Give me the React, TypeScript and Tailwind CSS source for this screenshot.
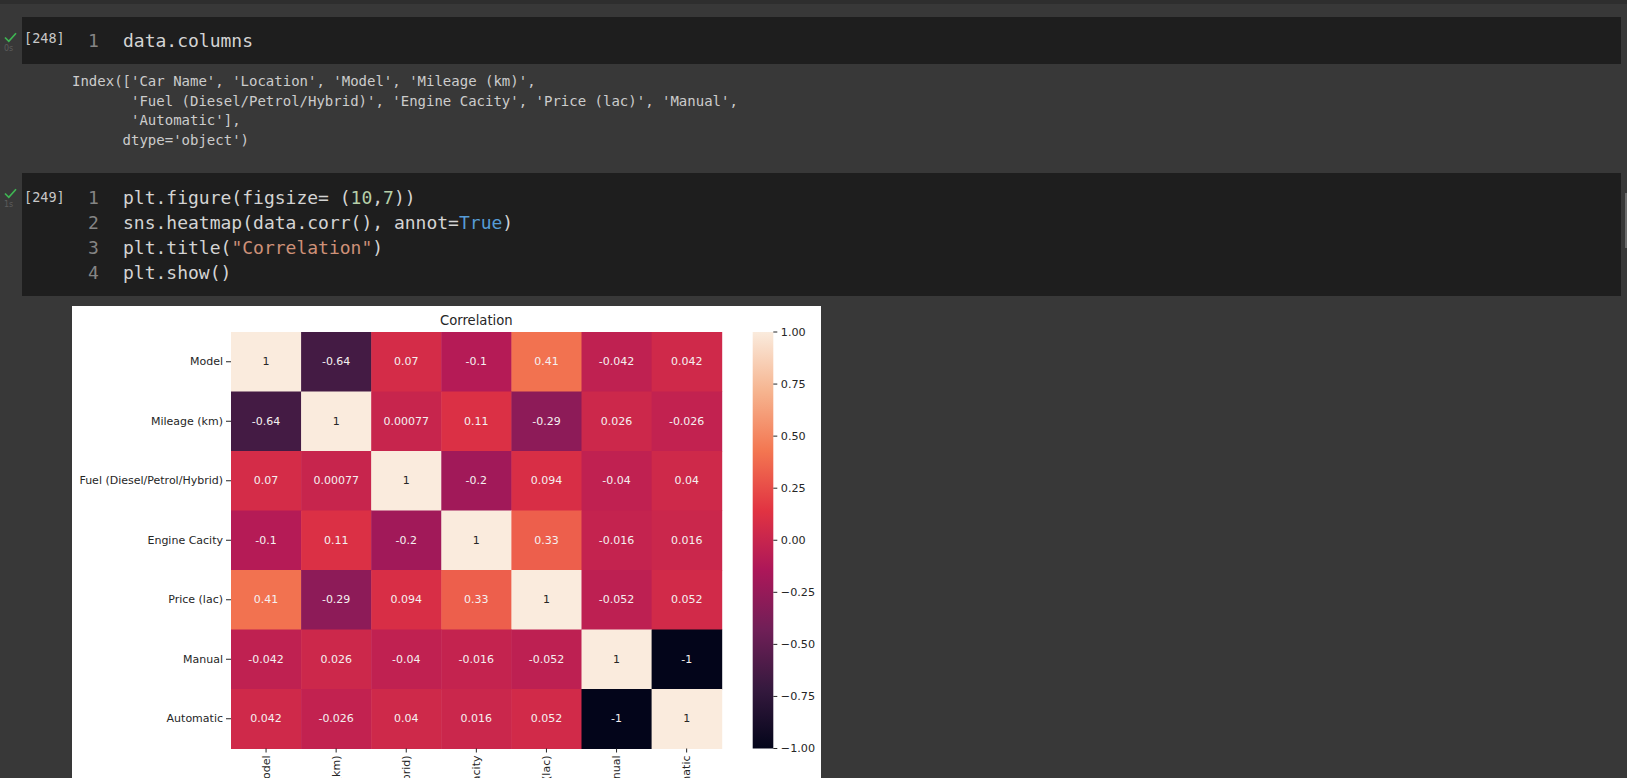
import React from "react";

const labels = ["Model", "Mileage (km)", "Fuel (Diesel/Petrol/Hybrid)", "Engine Cacity", "Price (lac)", "Manual", "Automatic"];

const corr: number[][] = [
  [1, -0.64, 0.07, -0.1, 0.41, -0.042, 0.042],
  [-0.64, 1, 0.00077, 0.11, -0.29, 0.026, -0.026],
  [0.07, 0.00077, 1, -0.2, 0.094, -0.04, 0.04],
  [-0.1, 0.11, -0.2, 1, 0.33, -0.016, 0.016],
  [0.41, -0.29, 0.094, 0.33, 1, -0.052, 0.052],
  [-0.042, 0.026, -0.04, -0.016, -0.052, 1, -1],
  [0.042, -0.026, 0.04, 0.016, 0.052, -1, 1],
];

// rocket colormap, sampled
const stops: [number, string][] = [
  [0, "#03051a"],
  [0.143, "#35193e"],
  [0.286, "#701f57"],
  [0.429, "#ad1759"],
  [0.571, "#e13342"],
  [0.714, "#f37651"],
  [0.857, "#f6b48f"],
  [1, "#faebdd"],
];

function hexToRgb(h: string) {
  return [parseInt(h.slice(1, 3), 16), parseInt(h.slice(3, 5), 16), parseInt(h.slice(5, 7), 16)];
}

function rocket(v: number) {
  const t = (v + 1) / 2;
  for (let i = 0; i < stops.length - 1; i++) {
    const [t0, c0] = stops[i];
    const [t1, c1] = stops[i + 1];
    if (t >= t0 && t <= t1) {
      const f = (t - t0) / (t1 - t0);
      const a = hexToRgb(c0);
      const b = hexToRgb(c1);
      const rgb = a.map((x, k) => Math.round(x + (b[k] - x) * f));
      return `rgb(${rgb[0]},${rgb[1]},${rgb[2]})`;
    }
  }
  return stops[stops.length - 1][1];
}

function CheckMark({ time }: { time: string }) {
  return (
    <div className="flex flex-col items-start">
      <svg width="13" height="11" viewBox="0 0 13 11">
        <polyline points="1,5.5 4.8,9.3 12,1.2" fill="none" stroke="#3fb553" strokeWidth="1.7" />
      </svg>
      <span className="text-[8px] leading-[12px] text-[#5c5c5c] font-['DejaVu_Sans',sans-serif]">{time}</span>
    </div>
  );
}

function Heatmap() {
  const x0 = 159;
  const y0 = 26;
  const cw = 70.1;
  const ch = 59.5;
  const H = ch * 7;
  const cbX = 680.7;
  const cbW = 20.6;
  const font = "DejaVu Sans, sans-serif";
  const cbTicks = [1, 0.75, 0.5, 0.25, 0, -0.25, -0.5, -0.75, -1];

  return (
    <svg width="749" height="540" viewBox="0 0 749 540" fontFamily={font}>
      <defs>
        <linearGradient id="rocketbar" x1="0" y1="1" x2="0" y2="0">
          {stops.map(([t, c]) => (
            <stop key={t} offset={t} stopColor={c} />
          ))}
        </linearGradient>
      </defs>
      <text x={x0 + (cw * 7) / 2} y={19} fontSize="13.2" textAnchor="middle" fill="#262626">
        Correlation
      </text>
      {corr.map((row, r) =>
        row.map((v, c) => (
          <g key={`${r}-${c}`}>
            <rect x={x0 + c * cw} y={y0 + r * ch} width={cw + 0.5} height={ch + 0.5} fill={rocket(v)} />
            <text
              x={x0 + c * cw + cw / 2}
              y={y0 + r * ch + ch / 2}
              fontSize="11"
              textAnchor="middle"
              dominantBaseline="central"
              fill={v === 1 ? "#262626" : "#f5f0f0"}
            >
              {String(v)}
            </text>
          </g>
        ))
      )}
      {labels.map((l, r) => (
        <g key={l}>
          <line x1={x0 - 5} x2={x0} y1={y0 + r * ch + ch / 2} y2={y0 + r * ch + ch / 2} stroke="#262626" strokeWidth="1" />
          <text x={x0 - 8} y={y0 + r * ch + ch / 2} fontSize="11" textAnchor="end" dominantBaseline="central" fill="#262626">
            {l}
          </text>
          <line x1={x0 + r * cw + cw / 2} x2={x0 + r * cw + cw / 2} y1={y0 + H} y2={y0 + H + 4} stroke="#262626" strokeWidth="1" />
          <text
            x={x0 + r * cw + cw / 2}
            y={y0 + H + 7}
            fontSize="11"
            textAnchor="end"
            dominantBaseline="central"
            fill="#262626"
            transform={`rotate(-90 ${x0 + r * cw + cw / 2} ${y0 + H + 7})`}
          >
            {l}
          </text>
        </g>
      ))}
      <rect x={cbX} y={y0} width={cbW} height={H} fill="url(#rocketbar)" />
      {cbTicks.map((t) => {
        const y = y0 + (1 - (t + 1) / 2) * H;
        return (
          <g key={t}>
            <line x1={cbX + cbW} x2={cbX + cbW + 4} y1={y} y2={y} stroke="#262626" strokeWidth="1" />
            <text x={cbX + cbW + 7.5} y={y} fontSize="11.2" dominantBaseline="central" fill="#262626">
              {(t < 0 ? "\u2212" : "") + Math.abs(t).toFixed(2)}
            </text>
          </g>
        );
      })}
    </svg>
  );
}

export default function App() {
  const mono = "font-['DejaVu_Sans_Mono','Liberation_Mono',monospace]";
  return (
    <div className="relative h-[778px] overflow-hidden bg-[#383838]">
      <div className="h-[4px] bg-[#2e2e2e]" />

      {/* cell 248 */}
      <div className="flex mt-[13px]">
        <div className="w-[22px] shrink-0 pl-[4px] pt-[15px]">
          <CheckMark time="0s" />
        </div>
        <div className={`flex-1 mr-[6px] bg-[#1e1e1e] flex py-[11px] ${mono}`}>
          <div className="w-[66px] pl-[2px] pt-[1px] text-[13.5px] leading-[19px] text-[#c8c8c8]">[248]</div>
          <div className="w-[35px] text-[18px] leading-[25px] text-[#858585]">1</div>
          <div className="text-[18px] leading-[25px] text-[#d4d4d4]">data.columns</div>
        </div>
      </div>

      <pre className={`mt-[8px] pl-[72px] text-[14px] leading-[19.5px] text-[#cccccc] ${mono}`}>
        {`Index(['Car Name', 'Location', 'Model', 'Mileage (km)',
       'Fuel (Diesel/Petrol/Hybrid)', 'Engine Cacity', 'Price (lac)', 'Manual',
       'Automatic'],
      dtype='object')`}
      </pre>

      {/* cell 249 */}
      <div className="flex mt-[23px]">
        <div className="w-[22px] shrink-0 pl-[4px] pt-[15px]">
          <CheckMark time="1s" />
        </div>
        <div className={`flex-1 mr-[6px] bg-[#1e1e1e] flex pt-[12px] pb-[11px] ${mono}`}>
          <div className="w-[66px] pl-[2px] pt-[3px] text-[13.5px] leading-[19px] text-[#c8c8c8]">[249]</div>
          <div className="w-[35px] text-[18px] leading-[25px] text-[#858585]">
            <div>1</div>
            <div>2</div>
            <div>3</div>
            <div>4</div>
          </div>
          <div className="text-[18px] leading-[25px] text-[#d4d4d4] whitespace-pre">
            <div>
              plt.figure(figsize= (<span className="text-[#b5cea8]">10</span>,<span className="text-[#b5cea8]">7</span>))
            </div>
            <div>
              sns.heatmap(data.corr(), annot=<span className="text-[#569cd6]">True</span>)
            </div>
            <div>
              plt.title(<span className="text-[#ce9178]">"Correlation"</span>)
            </div>
            <div>plt.show()</div>
          </div>
        </div>
      </div>

      <div className="ml-[72px] mt-[10px] w-[749px] h-[540px] bg-white">
        <Heatmap />
      </div>

      <div className="absolute right-0 top-[193px] w-[2px] h-[55px] bg-[#6b6b6b]" />
    </div>
  );
}
